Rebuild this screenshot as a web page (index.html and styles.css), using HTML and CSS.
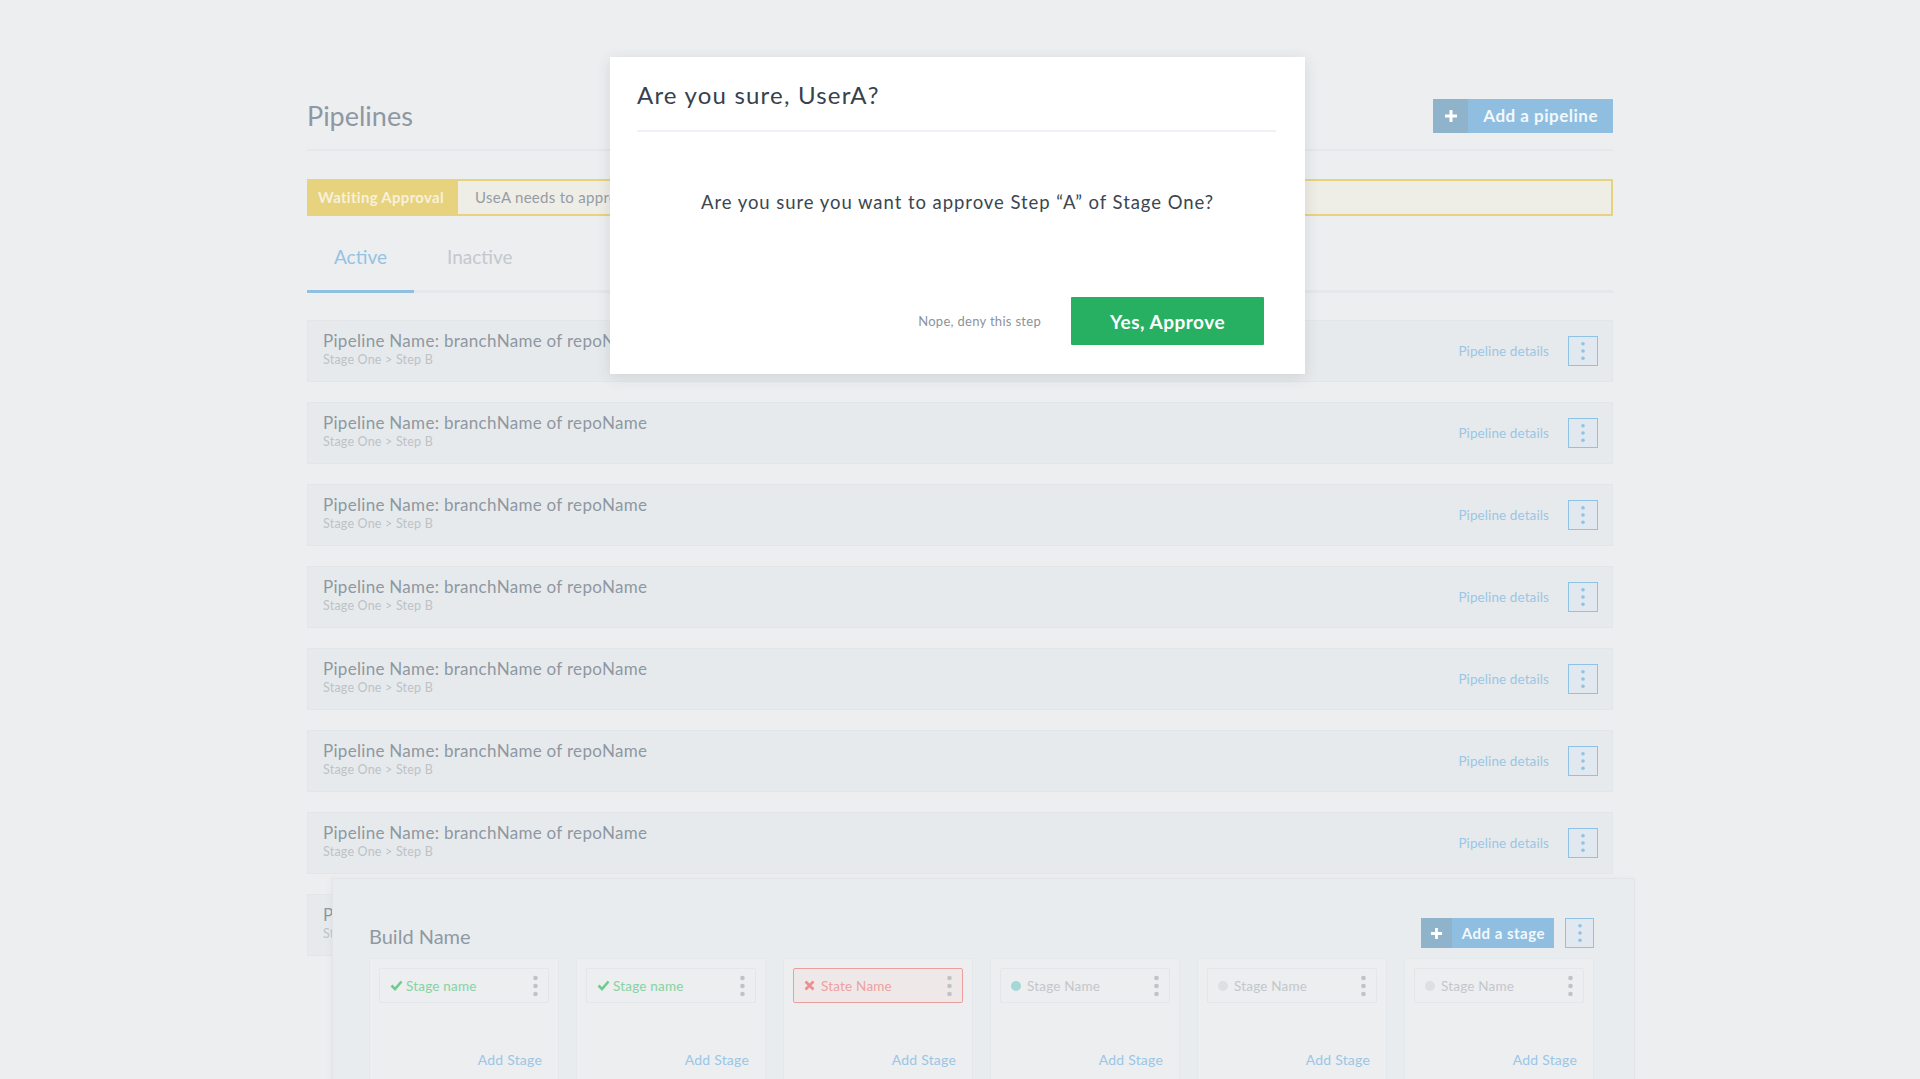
FILE: index.html
```html
<!DOCTYPE html>
<html lang="en">
<head>
<meta charset="utf-8">
<title>Pipelines</title>
<link rel="stylesheet" href="styles.css">
</head>
<body>
<div class="page">
  <header class="header">
    <h1 class="title">Pipelines</h1>
    <button class="add-btn">
      <span class="add-btn__plus"><svg width="14" height="14" viewBox="0 0 14 14"><path d="M7 1v12M1 7h12" stroke="#fff" stroke-width="3"/></svg></span>
      <span class="add-btn__label">Add a pipeline</span>
    </button>
  </header>

  <div class="banner">
    <div class="banner__label">Watiting Approval</div>
    <div class="banner__msg">UseA needs to approve Step “A” of Stage One</div>
  </div>

  <nav class="tabs">
    <div class="tab tab--active">Active</div>
    <div class="tab">Inactive</div>
  </nav>

  <div class="rows">
    <div class="row"><div class="row__text"><div class="row__title">Pipeline Name: branchName of repoName</div><div class="row__sub">Stage One &gt; Step B</div></div><div class="row__actions"><a class="row__link">Pipeline details</a><span class="kebab"><svg width="4" height="20" viewBox="0 0 4 20"><circle cx="2" cy="2" r="2"/><circle cx="2" cy="10" r="2"/><circle cx="2" cy="18" r="2"/></svg></span></div></div>
    <div class="row"><div class="row__text"><div class="row__title">Pipeline Name: branchName of repoName</div><div class="row__sub">Stage One &gt; Step B</div></div><div class="row__actions"><a class="row__link">Pipeline details</a><span class="kebab"><svg width="4" height="20" viewBox="0 0 4 20"><circle cx="2" cy="2" r="2"/><circle cx="2" cy="10" r="2"/><circle cx="2" cy="18" r="2"/></svg></span></div></div>
    <div class="row"><div class="row__text"><div class="row__title">Pipeline Name: branchName of repoName</div><div class="row__sub">Stage One &gt; Step B</div></div><div class="row__actions"><a class="row__link">Pipeline details</a><span class="kebab"><svg width="4" height="20" viewBox="0 0 4 20"><circle cx="2" cy="2" r="2"/><circle cx="2" cy="10" r="2"/><circle cx="2" cy="18" r="2"/></svg></span></div></div>
    <div class="row"><div class="row__text"><div class="row__title">Pipeline Name: branchName of repoName</div><div class="row__sub">Stage One &gt; Step B</div></div><div class="row__actions"><a class="row__link">Pipeline details</a><span class="kebab"><svg width="4" height="20" viewBox="0 0 4 20"><circle cx="2" cy="2" r="2"/><circle cx="2" cy="10" r="2"/><circle cx="2" cy="18" r="2"/></svg></span></div></div>
    <div class="row"><div class="row__text"><div class="row__title">Pipeline Name: branchName of repoName</div><div class="row__sub">Stage One &gt; Step B</div></div><div class="row__actions"><a class="row__link">Pipeline details</a><span class="kebab"><svg width="4" height="20" viewBox="0 0 4 20"><circle cx="2" cy="2" r="2"/><circle cx="2" cy="10" r="2"/><circle cx="2" cy="18" r="2"/></svg></span></div></div>
    <div class="row"><div class="row__text"><div class="row__title">Pipeline Name: branchName of repoName</div><div class="row__sub">Stage One &gt; Step B</div></div><div class="row__actions"><a class="row__link">Pipeline details</a><span class="kebab"><svg width="4" height="20" viewBox="0 0 4 20"><circle cx="2" cy="2" r="2"/><circle cx="2" cy="10" r="2"/><circle cx="2" cy="18" r="2"/></svg></span></div></div>
    <div class="row"><div class="row__text"><div class="row__title">Pipeline Name: branchName of repoName</div><div class="row__sub">Stage One &gt; Step B</div></div><div class="row__actions"><a class="row__link">Pipeline details</a><span class="kebab"><svg width="4" height="20" viewBox="0 0 4 20"><circle cx="2" cy="2" r="2"/><circle cx="2" cy="10" r="2"/><circle cx="2" cy="18" r="2"/></svg></span></div></div>
    <div class="row"><div class="row__text"><div class="row__title">Pipeline Name: branchName of repoName</div><div class="row__sub">Stage One &gt; Step B</div></div><div class="row__actions"><a class="row__link">Pipeline details</a><span class="kebab"><svg width="4" height="20" viewBox="0 0 4 20"><circle cx="2" cy="2" r="2"/><circle cx="2" cy="10" r="2"/><circle cx="2" cy="18" r="2"/></svg></span></div></div>
  </div>
</div>

<section class="build">
  <div class="build__head">
    <h2 class="build__title">Build Name</h2>
    <div class="build__tools">
      <button class="add-btn add-btn--small">
        <span class="add-btn__plus"><svg width="13" height="13" viewBox="0 0 14 14"><path d="M7 1v12M1 7h12" stroke="#fff" stroke-width="3"/></svg></span>
        <span class="add-btn__label">Add a stage</span>
      </button>
      <span class="kebab kebab--tall"><svg width="4" height="20" viewBox="0 0 4 20"><circle cx="2" cy="2" r="2"/><circle cx="2" cy="10" r="2"/><circle cx="2" cy="18" r="2"/></svg></span>
    </div>
  </div>
  <div class="stages">
    <div class="stage">
      <div class="chip chip--ok"><span class="chip__icon"><svg width="13" height="11" viewBox="0 0 13 11"><path d="M1.5 5.5l3.5 3.5L11.5 1.5" fill="none" stroke="#6fcb8e" stroke-width="2.6"/></svg></span><span class="chip__name">Stage name</span><span class="chip__menu"><svg width="5" height="22" viewBox="0 0 5 22"><circle cx="2.5" cy="3" r="2.3"/><circle cx="2.5" cy="11" r="2.3"/><circle cx="2.5" cy="19" r="2.3"/></svg></span></div>
      <a class="stage__add">Add Stage</a>
    </div>
    <div class="stage">
      <div class="chip chip--ok"><span class="chip__icon"><svg width="13" height="11" viewBox="0 0 13 11"><path d="M1.5 5.5l3.5 3.5L11.5 1.5" fill="none" stroke="#6fcb8e" stroke-width="2.6"/></svg></span><span class="chip__name">Stage name</span><span class="chip__menu"><svg width="5" height="22" viewBox="0 0 5 22"><circle cx="2.5" cy="3" r="2.3"/><circle cx="2.5" cy="11" r="2.3"/><circle cx="2.5" cy="19" r="2.3"/></svg></span></div>
      <a class="stage__add">Add Stage</a>
    </div>
    <div class="stage">
      <div class="chip chip--fail"><span class="chip__icon"><svg width="11" height="11" viewBox="0 0 11 11"><path d="M1.5 1.5l8 8M9.5 1.5l-8 8" fill="none" stroke="#ec8e8e" stroke-width="2.6"/></svg></span><span class="chip__name">State Name</span><span class="chip__menu"><svg width="5" height="22" viewBox="0 0 5 22"><circle cx="2.5" cy="3" r="2.3"/><circle cx="2.5" cy="11" r="2.3"/><circle cx="2.5" cy="19" r="2.3"/></svg></span></div>
      <a class="stage__add">Add Stage</a>
    </div>
    <div class="stage">
      <div class="chip"><span class="chip__dot chip__dot--run"></span><span class="chip__name">Stage Name</span><span class="chip__menu"><svg width="5" height="22" viewBox="0 0 5 22"><circle cx="2.5" cy="3" r="2.3"/><circle cx="2.5" cy="11" r="2.3"/><circle cx="2.5" cy="19" r="2.3"/></svg></span></div>
      <a class="stage__add">Add Stage</a>
    </div>
    <div class="stage">
      <div class="chip"><span class="chip__dot"></span><span class="chip__name">Stage Name</span><span class="chip__menu"><svg width="5" height="22" viewBox="0 0 5 22"><circle cx="2.5" cy="3" r="2.3"/><circle cx="2.5" cy="11" r="2.3"/><circle cx="2.5" cy="19" r="2.3"/></svg></span></div>
      <a class="stage__add">Add Stage</a>
    </div>
    <div class="stage">
      <div class="chip"><span class="chip__dot"></span><span class="chip__name">Stage Name</span><span class="chip__menu"><svg width="5" height="22" viewBox="0 0 5 22"><circle cx="2.5" cy="3" r="2.3"/><circle cx="2.5" cy="11" r="2.3"/><circle cx="2.5" cy="19" r="2.3"/></svg></span></div>
      <a class="stage__add">Add Stage</a>
    </div>
  </div>
</section>

<div class="modal">
  <div class="modal__head">
    <h3 class="modal__title">Are you sure, UserA?</h3>
  </div>
  <div class="modal__body">Are you sure you want to approve Step “A” of Stage One?</div>
  <div class="modal__foot">
    <a class="modal__deny">Nope, deny this step</a>
    <button class="modal__ok">Yes, Approve</button>
  </div>
</div>
</body>
</html>
```
FILE: styles.css
```css
* { box-sizing: border-box; }
html, body { margin: 0; padding: 0; }
body {
  background: #edeef0;
  font-family: Lato, "Noto Sans", sans-serif;
  height: 1079px;
  overflow: hidden;
  position: relative;
  color: #8c96a0;
}
h1, h2, h3 { margin: 0; font-weight: 400; }
button { font-family: inherit; border: 0; padding: 0; cursor: pointer; }

.page { width: 1306px; margin: 0 auto; }

.header {
  margin-top: 98px;
  display: flex;
  justify-content: space-between;
  align-items: center;
  padding-bottom: 16px;
  border-bottom: 2px solid #e5e7ea;
}
.title { font-size: 27px; color: #8d98a3; line-height: 34px; padding-top: 1px; }

.add-btn { display: flex; height: 34px; background: #8fbee0; color: #f3f8fc; }
.add-btn__plus { width: 35px; background: #8fb3ca; display: flex; align-items: center; justify-content: center; }
.add-btn__label { padding: 0 15px 0 15px; font-size: 17px; font-weight: 700; line-height: 34px; letter-spacing: 0.5px; }
.add-btn--small { height: 30px; }
.add-btn--small .add-btn__plus { width: 31px; }
.add-btn--small .add-btn__label { font-size: 15px; line-height: 30px; padding: 0 9px 0 10px; letter-spacing: 0.5px; }

.banner { margin-top: 28px; display: flex; height: 37px; }
.banner__label {
  width: 151px; background: #e7d27d; color: #f7f1dc;
  font-size: 15px; font-weight: 700; line-height: 37px; padding-left: 11px; letter-spacing: 0.3px;
}
.banner__msg {
  flex: 1; background: #eeede6; border: 2px solid #e7d27d; border-left: 0;
  font-size: 15px; color: #959ca5; line-height: 33px; padding-left: 17px; letter-spacing: 0.3px;
}

.tabs { margin-top: 24px; display: flex; border-bottom: 3px solid #e5e7ea; }
.tab { padding: 5px 27px 21px; font-size: 19px; line-height: 24px; color: #c3c8cd; margin-right: 6px; margin-bottom: -3px; border-bottom: 3px solid transparent; }
.tab--active { color: #93c3e3; border-bottom-color: #8fc0e2; }

.rows { margin-top: 27px; display: flex; flex-direction: column; gap: 20px; }
.row {
  height: 62px; background: #e7eaec; border: 1px solid #e3e6e8;
  display: flex; justify-content: space-between; align-items: flex-start;
  padding: 10px 14px 0 15px;
}
.row__title { font-size: 17px; line-height: 20px; color: #8e98a2; letter-spacing: 0.3px; }
.row__sub { font-size: 12.5px; line-height: 15px; color: #bcc2c7; margin-top: 1px; letter-spacing: 0.2px; }
.row__actions { align-self: center; display: flex; align-items: center; gap: 19px; margin-top: -11px; }
.row__link { font-size: 13.5px; color: #9ac6e6; letter-spacing: 0.1px; }
.kebab {
  width: 30px; height: 30px; border: 1px solid #8fc3e6; background: #e1e8ef;
  display: flex; align-items: center; justify-content: center; fill: #8fc3e6;
}
.kebab svg { width: 4px; height: 18px; }
.kebab--tall { width: 29px; height: 30px; }

.build {
  position: absolute; left: 332px; top: 878px; width: 1303px; height: 260px;
  background: #e9ecee; border: 1px solid #e2e5e8;
  padding: 39px 40px 0 36px;
  box-shadow: -2px 0 6px rgba(0,0,0,0.03);
}
.build__head { display: flex; justify-content: space-between; align-items: flex-end; height: 30px; }
.build__title { font-size: 20px; color: #8f99a3; line-height: 26px; margin-bottom: -1px; }
.build__tools { display: flex; gap: 11px; }
.stages { margin-top: 10px; display: grid; grid-template-columns: repeat(6, 190px); gap: 17px; }
.stage {
  height: 200px; background: #eceef0; border: 1px solid #e5e8ea;
  padding: 9px 9px 0; display: flex; flex-direction: column;
}
.chip {
  height: 35px; border: 1px solid #e4e7e9; border-radius: 2px; background: #eceef0;
  display: flex; align-items: center; padding: 0 10px 0 10px;
  font-size: 13.5px; color: #c3c7cb; letter-spacing: 0.2px;
}
.chip__icon { display: flex; margin-right: 3px; }
.chip__name { flex: 1; }
.chip--ok { color: #86d3a2; }
.chip--fail { border-color: #eb9e9e; background: #efe8e8; color: #ef9f9f; }
.chip--fail .chip__icon { margin-right: 6px; }
.chip__menu { display: flex; fill: #bfc3c7; }
.chip__dot { width: 10px; height: 10px; border-radius: 50%; background: #dde0e3; margin-right: 6px; }
.chip__dot--run { background: #a3d8d6; }
.stage__add { margin-top: 47px; text-align: right; padding-right: 7px; font-size: 14px; line-height: 20px; color: #9ac6e6; letter-spacing: 0.2px; }

.modal {
  position: absolute; left: 610px; top: 57px; width: 695px; height: 317px;
  background: #fff; box-shadow: 0 3px 14px rgba(40,50,60,0.12);
  display: flex; flex-direction: column;
}
.modal__head { margin: 0 29px 0 27px; padding: 22px 0 19px; border-bottom: 2px solid #eef2f6; }
.modal__title { font-size: 24px; line-height: 32px; color: #36424e; letter-spacing: 1.2px; }
.modal__body { flex: 1; text-align: center; padding-top: 58px; font-size: 18.5px; line-height: 24px; color: #3b4651; letter-spacing: 0.95px; }
.modal__foot { display: flex; justify-content: flex-end; align-items: center; gap: 30px; padding: 0 41px 29px 0; }
.modal__deny { font-size: 13px; color: #8b929a; letter-spacing: 0.3px; }
.modal__ok { width: 193px; height: 48px; background: #28b062; color: #fff; font-size: 19px; font-weight: 700; border-radius: 1px; letter-spacing: 0.5px; }
```
